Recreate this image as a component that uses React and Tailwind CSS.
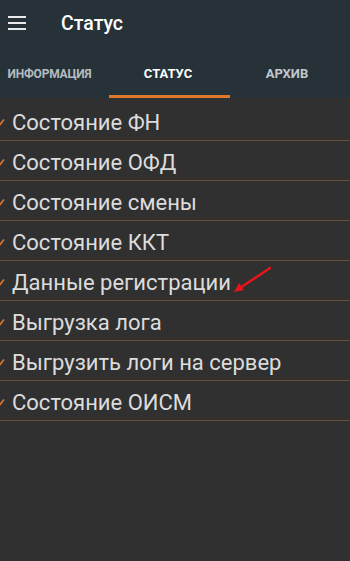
import React from "react";

const items = [
  "Состояние ФН",
  "Состояние ОФД",
  "Состояние смены",
  "Состояние ККТ",
  "Данные регистрации",
  "Выгрузка лога",
  "Выгрузить логи на сервер",
  "Состояние ОИСМ",
];

function Check() {
  return (
    <svg width="8" height="8" viewBox="0 0 8 8" className="absolute left-[-3px] top-[17px]">
      <path d="M1 4.5 L3 6.5 L7 1.5" stroke="#e0782b" strokeWidth="1.6" fill="none" />
    </svg>
  );
}

export default function App() {
  return (
    <div
      className="w-[350px] h-[561px] bg-[#303030] overflow-hidden relative"
      style={{ fontFamily: "Roboto, 'Liberation Sans', sans-serif" }}
    >
      <div className="bg-[#263238]">
        <div className="h-[46px] flex items-center">
          <div className="w-[61px] pl-[8px] flex flex-col gap-[4px]">
            <div className="w-[18px] h-[2px] bg-[#e8eaeb]" />
            <div className="w-[18px] h-[2px] bg-[#e8eaeb]" />
            <div className="w-[18px] h-[2px] bg-[#e8eaeb]" />
          </div>
          <div className="text-[19.5px] font-medium text-white pt-[1px]">Статус</div>
        </div>
        <div className="h-[52px] flex">
          <div className="w-[109px] flex items-center justify-center pr-[10px] pt-[3px]">
            <span className="text-[12px] font-bold text-[#b4bcc0] tracking-[-0.2px]">ИНФОРМАЦИЯ</span>
          </div>
          <div className="w-[121px] flex flex-col">
            <div className="flex-1 flex items-center justify-center pr-[3px] pt-[6px]">
              <span className="text-[13px] font-bold text-white">СТАТУС</span>
            </div>
            <div className="h-[3px] bg-[#e0782b]" />
          </div>
          <div className="w-[120px] flex items-center justify-center pr-[6px] pt-[3px]">
            <span className="text-[13px] font-bold text-[#c2c8cb]">АРХИВ</span>
          </div>
        </div>
      </div>
      <div className="pt-[3px] relative">
        {items.map((t) => (
          <div
            key={t}
            className="relative h-[40px] border-b border-[#6d4c35] flex items-center pl-[12px] pt-[4px]"
          >
            <Check />
            <span className="text-[22px] leading-none text-[#dcdcdc]">{t}</span>
          </div>
        ))}
        <svg
          width="50"
          height="36"
          viewBox="0 0 50 36"
          className="absolute left-[228px] top-[166px]"
        >
          <path d="M42 4 L12 24" stroke="#e8141b" strokeWidth="2.5" strokeLinecap="round" />
          <path d="M6 28 L11 19 L16 26 Z" fill="#e8141b" />
        </svg>
      </div>
    </div>
  );
}
